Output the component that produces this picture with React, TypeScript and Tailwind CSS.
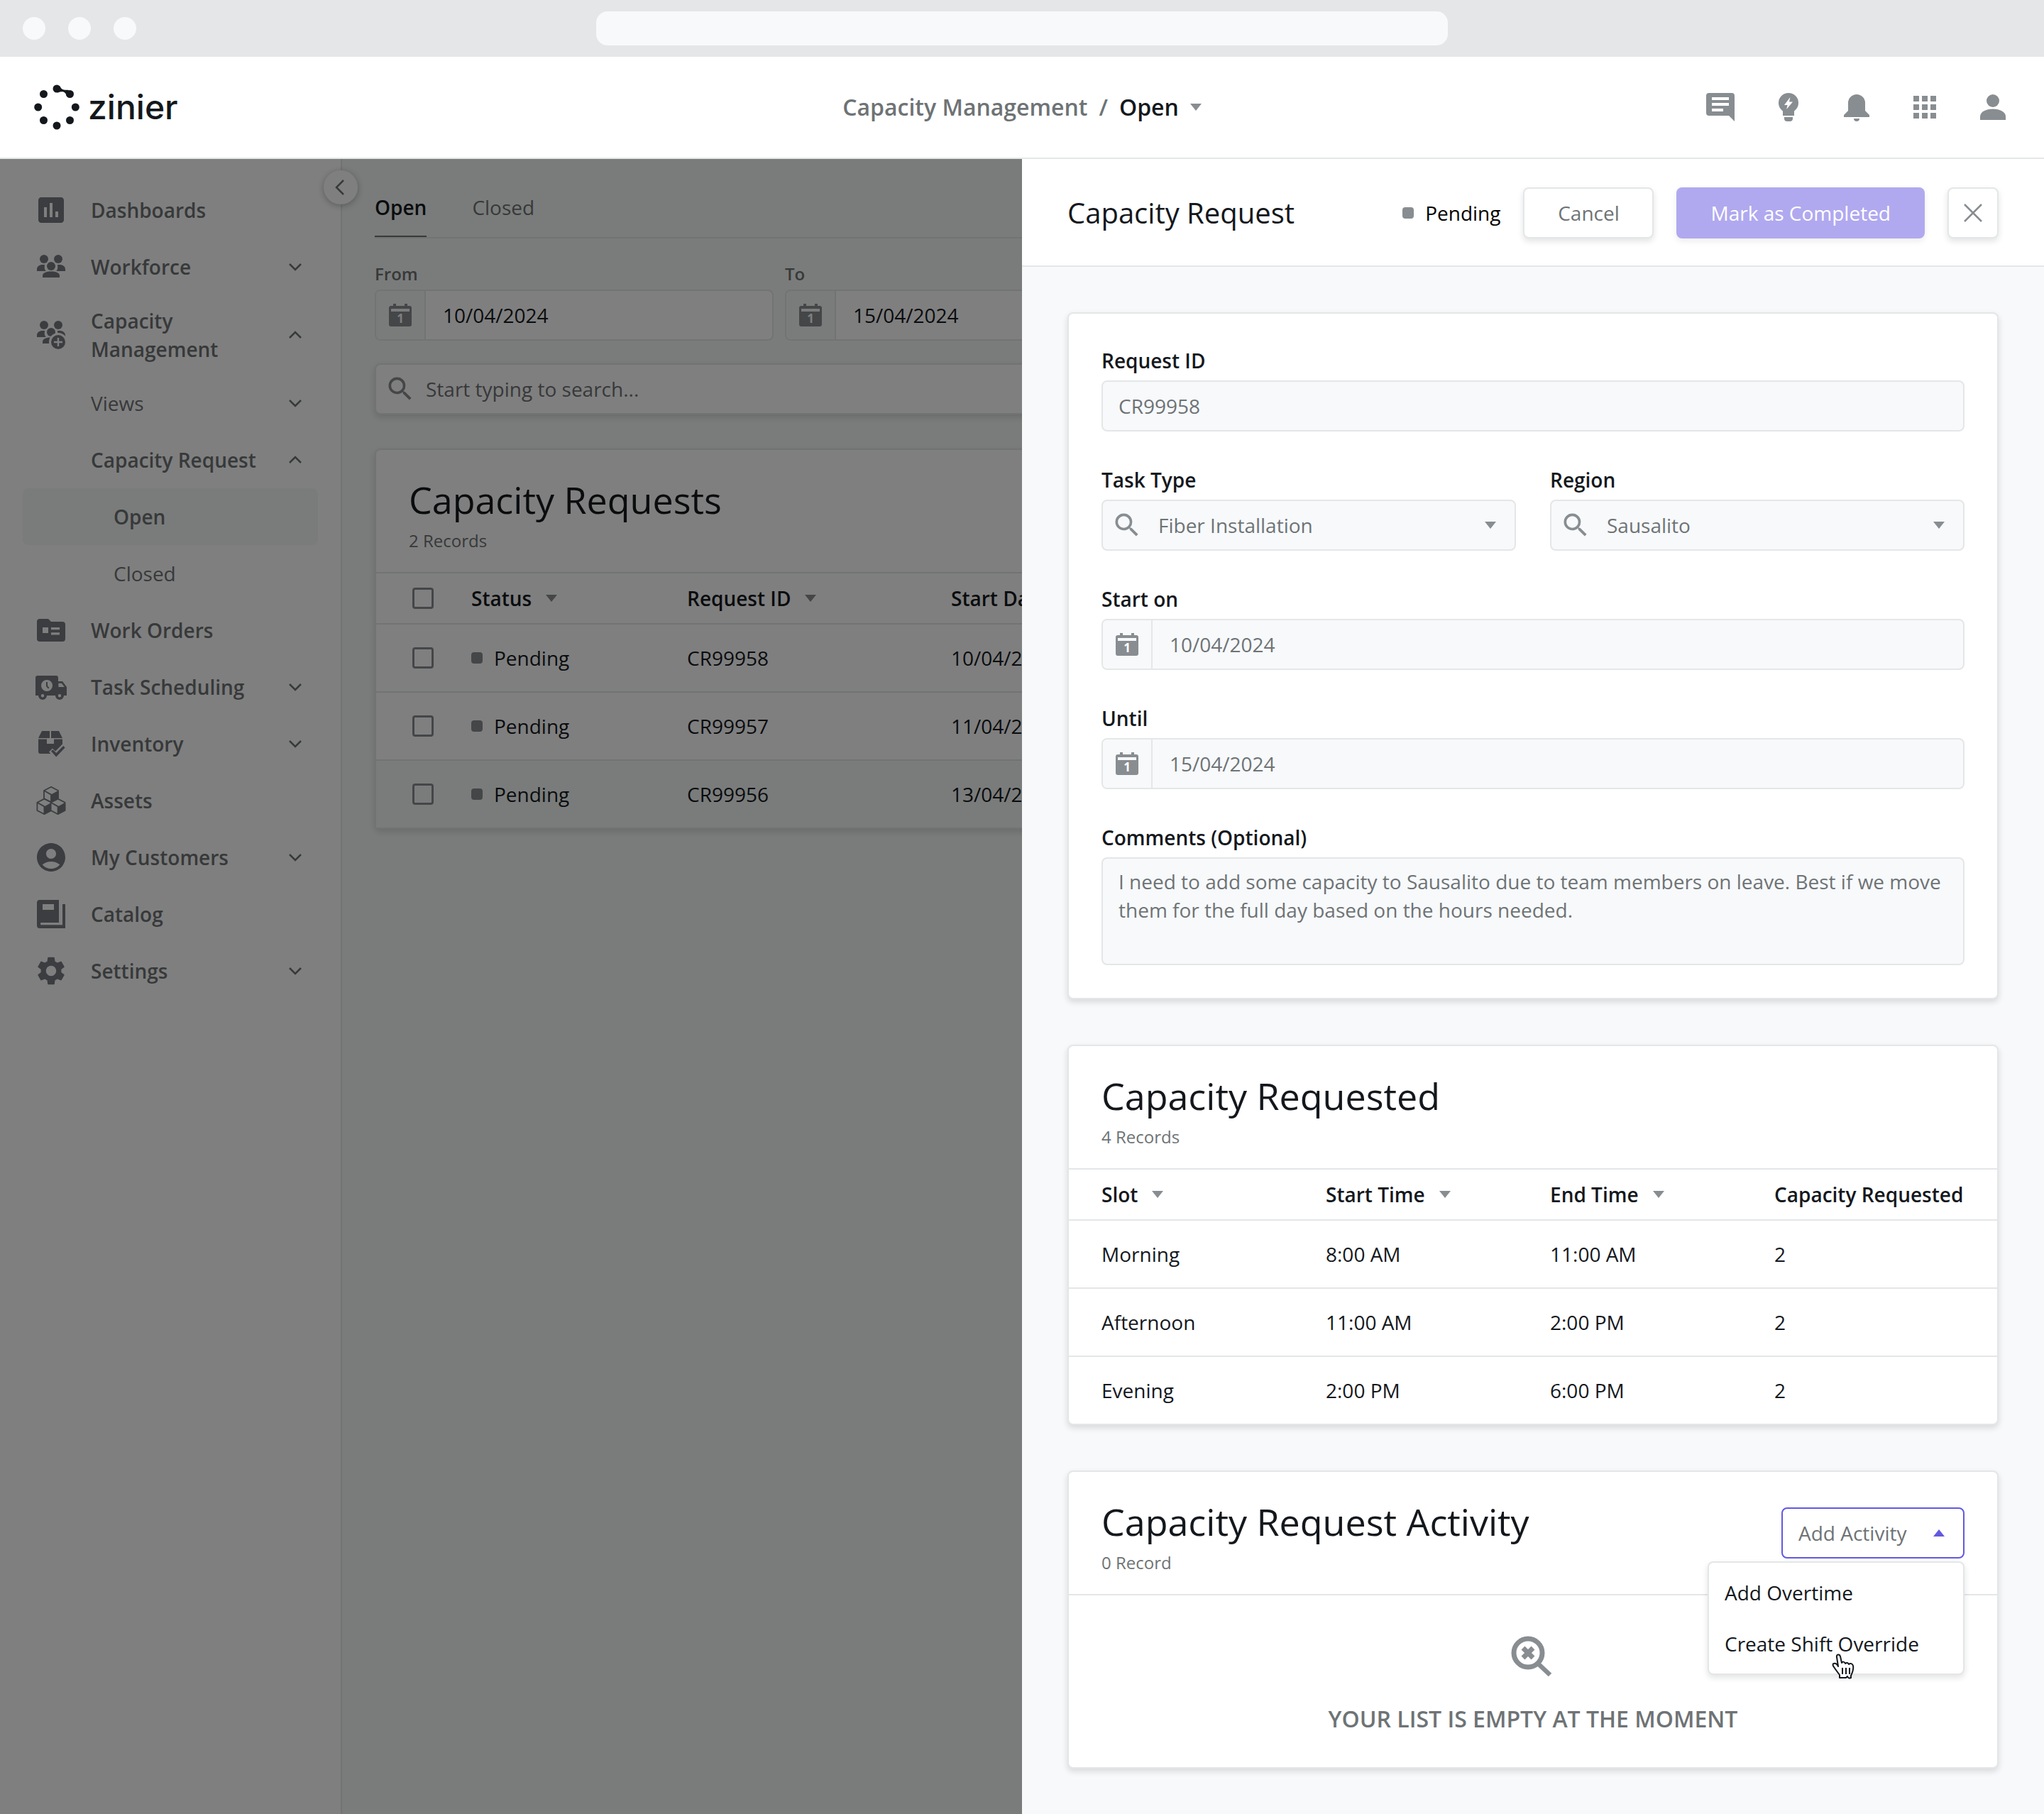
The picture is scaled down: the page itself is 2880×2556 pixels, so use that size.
import { ReactNode, useState } from "react";
import clsx from "clsx";
import { MdAccountCircle, MdApps, MdInsertChart, MdSearch, MdSettings } from "react-icons/md";

type IconProps = { className?: string };

type NavItem = {
  label: string;
  icon?: ReactNode;
  level: 0 | 1 | 2;
  chevron?: "up" | "down";
  strong?: boolean;
  active?: boolean;
};

const Svg = ({ className, children }: IconProps & { children: ReactNode }) => (
  <svg viewBox="0 0 24 24" fill="currentColor" fillRule="evenodd" className={className} aria-hidden="true">
    {children}
  </svg>
);

const People = () => (
  <>
    <circle cx="7" cy="6" r="3" />
    <circle cx="17" cy="6" r="3" />
    <circle cx="12" cy="11" r="3" />
    <path d="M2 14.5v-1.3C2 11.300 3.700 10 6 10h1.600a5 5 0 0 0 .7 4.500zM22 14.500v-1.300c0-1.900-1.700-3.200-4-3.200h-1.600a5 5 0 0 1-.7 4.500z" />
    <path d="M6 19v-1.300c0-1.900 2.700-2.900 6-2.900s6 1 6 2.900V19z" />
  </>
);

const WorkforceIcon = ({ className }: IconProps) => (
  <Svg className={className}>
    <g transform="translate(0 .5)">
      <People />
    </g>
  </Svg>
);

const CapacityIcon = ({ className }: IconProps) => (
  <Svg className={className}>
    <g transform="translate(0 -1)">
      <People />
    </g>
    <circle cx="17" cy="17" r="6.500" fill="#fff" />
    <circle cx="17" cy="17" r="5" />
    <path d="M16.400 14h1.200v2.400H20v1.200h-2.400V20h-1.200v-2.400H14v-1.200h2.400z" fill="#fff" />
  </Svg>
);

const WorkOrderIcon = ({ className }: IconProps) => (
  <Svg className={className}>
    <path d="M4 4h6l2 2h8a2 2 0 0 1 2 2v10a2 2 0 0 1-2 2H4a2 2 0 0 1-2-2V6a2 2 0 0 1 2-2zm2 6v4h4v-4zm6 0v1.600h6V10zm0 3.600v1.600h6v-1.600z" />
  </Svg>
);

const TruckIcon = ({ className }: IconProps) => (
  <Svg className={className}>
    <path d="M2.500 4h13A1.500 1.500 0 0 1 17 5.500V8h3l3 4v6h-2a3 3 0 0 1-6 0H9a3 3 0 0 1-6 0H1V5.500A1.500 1.500 0 0 1 2.500 4zM9 7a4 4 0 1 0 0 8 4 4 0 0 0 0-8zm8.200 2.400V12h4.200l-2-2.600zM6 17a1.100 1.100 0 1 0 0 2.200A1.100 1.100 0 0 0 6 17zm12 0a1.100 1.100 0 1 0 0 2.200 1.100 1.100 0 0 0 0-2.200z" />
    <path d="M8.500 8.500h1v2.600l1.200 1.400-.7.700-1.500-1.700z" />
  </Svg>
);

const InventoryIcon = ({ className }: IconProps) => (
  <Svg className={className}>
    <path d="M5.500 3H11v5H3zM12 3h5.500L20 8h-8z" />
    <path d="M3 8.800h6V12h5V8.800h6v3.400l-5 5-2-2-2.500 2.500 1.300 1.300H4.500A1.500 1.500 0 0 1 3 17.500z" />
    <path d="M12 17.300l1.200-1.200 2.400 2.400 5-5 1.200 1.200-6.200 6.600z" />
  </Svg>
);

const Cube = ({ x, y }: { x: number; y: number }) => (
  <g transform={`translate(${x} ${y})`}>
    <path d="M0-5.400 5-2.800V2.800L0 5.400-5 2.800V-2.800z" fill="#fff" stroke="currentColor" strokeWidth=".9" strokeLinejoin="round" />
    <path d="M0 0 5-2.800V2.800L0 5.400z" />
    <path d="M-5-2.800 0 0v5.400" fill="none" stroke="currentColor" strokeWidth=".9" />
  </g>
);

const AssetsIcon = ({ className }: IconProps) => (
  <Svg className={className}>
    <Cube x={12} y={7.800} />
    <Cube x={7.200} y={16.200} />
    <Cube x={16.800} y={16.200} />
  </Svg>
);

const CatalogIcon = ({ className }: IconProps) => (
  <Svg className={className}>
    <path d="M4 2h13.500v16H4.600v1.600H20V5h2v17H4a2 2 0 0 1-2-2V4a2 2 0 0 1 2-2zm2 3v4h8V5z" />
  </Svg>
);

const CommentIcon = ({ className }: IconProps) => (
  <Svg className={className}>
    <path d="M4 2h16a2 2 0 0 1 2 2v18l-4-4H4a2 2 0 0 1-2-2V4a2 2 0 0 1 2-2zm2 3v2h12V5zm0 4v2h12V9zm0 4v2h8v-2z" />
  </Svg>
);

const BulbIcon = ({ className }: IconProps) => (
  <Svg className={className}>
    <path d="M12 2a7 7 0 0 0-7 7c0 2.600 1.300 4.400 3 5.800V18h8v-3.200c1.700-1.400 3-3.200 3-5.800a7 7 0 0 0-7-7zm1.200 3L9 10.500h2.300l-.7 3 4.400-5.300h-2.500zM9 19h6v1a2 2 0 0 1-2 2h-2a2 2 0 0 1-2-2z" />
  </Svg>
);

const BellIcon = ({ className }: IconProps) => (
  <Svg className={className}>
    <path d="M12 3a6 6 0 0 0-6 6v5.500l-3 3V19h18v-1.500l-3-3V9a6 6 0 0 0-6-6zm-2 17a2 2 0 0 0 4 0z" />
  </Svg>
);

const PersonIcon = ({ className }: IconProps) => (
  <Svg className={className}>
    <circle cx="12" cy="7.500" r="4.500" />
    <path d="M3 21v-2.500c0-3.100 4-5.300 9-5.300s9 2.200 9 5.300V21z" />
  </Svg>
);

const CalendarIcon = ({ className }: IconProps) => (
  <svg viewBox="0 0 36 36" fill="currentColor" className={className} aria-hidden="true">
    <path
      fillRule="evenodd"
      d="M8 2h4v3h12V2h4v3h3a3 3 0 0 1 3 3v23a3 3 0 0 1-3 3H5a3 3 0 0 1-3-3V8a3 3 0 0 1 3-3h3zM5 9v4h26V9z"
    />
    <text x="18" y="29" textAnchor="middle" fontSize="17" fontWeight="700" fill="#fff">
      1
    </text>
  </svg>
);

const EmptyIcon = ({ className }: IconProps) => (
  <svg viewBox="0 0 72 72" fill="none" stroke="currentColor" className={className} aria-hidden="true">
    <circle cx="29" cy="33" r="20" strokeWidth="7" />
    <path d="M43 48 60 64" strokeWidth="6.500" />
    <path d="M22 26 36 40M36 26 22 40" strokeWidth="7" />
  </svg>
);

const Triangle = ({ className, up }: IconProps & { up?: boolean }) => (
  <svg viewBox="0 0 16 10" fill="currentColor" className={clsx("h-[10px] w-4 shrink-0", className)} aria-hidden="true">
    <path d={up ? "M8 0l8 10H0z" : "M0 0h16L8 10z"} />
  </svg>
);

const Chevron = ({ dir }: { dir: "up" | "down" | "left" }) => {
  const paths = { up: "M8 20l8-8 8 8", down: "M8 12l8 8 8-8", left: "M20 6l-10 10 10 10" };
  return (
    <svg viewBox="0 0 32 32" fill="none" stroke="currentColor" strokeWidth="2.500" className="size-8 shrink-0" aria-hidden="true">
      <path d={paths[dir]} />
    </svg>
  );
};

const HandCursor = ({ className }: IconProps) => (
  <svg viewBox="0 0 32 36" className={className} fill="#fff" stroke="#14181d" strokeWidth="2" strokeLinejoin="round" aria-hidden="true">
    <path d="M11 34v-4C8 26 5 22 3 19c-2-3-2-5 0-5 3-1 5 2 6 4L7 5c-1-4 4-5 5-1l2 9c1-2 4-2 5 1 2-2 4-1 5 1 2-2 5-1 6 2 1 5-1 10-3 14v3c-2 1-4 1-5-2l-2 2z" />
    <path d="M15 20v9M20 20v9M25 20v9" fill="none" />
  </svg>
);

const Logo = () => (
  <a href="#" className="flex items-center gap-3 text-[#14181d]" aria-label="zinier">
    <svg viewBox="0 0 64 64" fill="currentColor" className="size-16" aria-hidden="true">
      <circle cx="32" cy="6" r="5.500" />
      <circle cx="50.500" cy="13.500" r="5.500" />
      <circle cx="58.300" cy="32" r="5.500" />
      <circle cx="50.500" cy="50.500" r="5.500" />
      <circle cx="32" cy="58" r="5.500" />
      <circle cx="13.500" cy="50.500" r="5.500" />
      <circle cx="5.700" cy="32" r="5.500" />
      <circle cx="13.500" cy="13.500" r="5.500" />
      <path d="M36 2.300C38 6 40 7.300 42 7.600c2 .4 4.500.2 7 .5l-3 8.500c-1-3.500-2.500-5.600-4.500-6.200-2.500-.6-5 .1-8.500 1z" />
    </svg>
    <span className="font-[Inter] text-[48px] leading-[56px] font-medium">zinier</span>
  </a>
);

const navItems: NavItem[] = [
  { label: "Dashboards", icon: <MdInsertChart className="size-12" />, level: 0 },
  { label: "Workforce", icon: <WorkforceIcon className="size-12" />, level: 0, chevron: "down" },
  { label: "Capacity Management", icon: <CapacityIcon className="size-12" />, level: 0, chevron: "up" },
  { label: "Views", level: 1, chevron: "down" },
  { label: "Capacity Request", level: 1, chevron: "up", strong: true },
  { label: "Open", level: 2, strong: true, active: true },
  { label: "Closed", level: 2 },
  { label: "Work Orders", icon: <WorkOrderIcon className="size-12" />, level: 0 },
  { label: "Task Scheduling", icon: <TruckIcon className="size-12" />, level: 0, chevron: "down" },
  { label: "Inventory", icon: <InventoryIcon className="size-12" />, level: 0, chevron: "down" },
  { label: "Assets", icon: <AssetsIcon className="size-12" />, level: 0 },
  { label: "My Customers", icon: <MdAccountCircle className="size-12" />, level: 0, chevron: "down" },
  { label: "Catalog", icon: <CatalogIcon className="size-12" />, level: 0 },
  { label: "Settings", icon: <MdSettings className="size-12" />, level: 0, chevron: "down" },
];

const requests = [
  { id: "CR99958", start: "10/04/2024" },
  { id: "CR99957", start: "11/04/2024" },
  { id: "CR99956", start: "13/04/2024", hovered: true },
];

const slots = [
  { slot: "Morning", start: "8:00 AM", end: "11:00 AM", capacity: 2 },
  { slot: "Afternoon", start: "11:00 AM", end: "2:00 PM", capacity: 2 },
  { slot: "Evening", start: "2:00 PM", end: "6:00 PM", capacity: 2 },
];

const BrowserBar = () => (
  <div className="grid h-20 grid-cols-[1fr_1200px_1fr] items-center bg-[#e4e6e8]">
    <div className="flex gap-8 pl-8">
      <span className="size-8 rounded-full bg-[#f7f9fb]" />
      <span className="size-8 rounded-full bg-[#f7f9fb]" />
      <span className="size-8 rounded-full bg-[#f7f9fb]" />
    </div>
    <div className="h-12 rounded-2xl bg-[#f7f9fb]" />
  </div>
);

const Header = () => (
  <header className="grid h-36 grid-cols-[1fr_auto_1fr] items-center border-b-2 border-[#e4e6e7] bg-white px-12">
    <Logo />
    <nav className="flex items-center gap-4 text-[32px] leading-10 font-semibold">
      <a href="#" className="text-[#6e7375]">
        Capacity Management
      </a>
      <span className="text-[#6e7375]">/</span>
      <button className="flex items-center gap-4 text-[#14181d]">
        Open
        <Triangle className="text-[#888d91]" />
      </button>
    </nav>
    <div className="flex justify-end gap-12 text-[#888d91]">
      <button aria-label="Messages">
        <CommentIcon className="size-12" />
      </button>
      <button aria-label="Insights">
        <BulbIcon className="size-12" />
      </button>
      <button aria-label="Notifications">
        <BellIcon className="size-12" />
      </button>
      <button aria-label="Apps">
        <MdApps className="size-12" />
      </button>
      <button aria-label="Account">
        <PersonIcon className="size-12" />
      </button>
    </div>
  </header>
);

const Sidebar = () => (
  <aside className="relative w-[482px] shrink-0 border-r-2 border-[#e4e6e7] bg-white px-8 py-8">
    <ul>
      {navItems.map((item) => (
        <li key={item.label + item.level}>
          <a
            href="#"
            className={clsx(
              "flex min-h-20 items-center rounded-lg p-4 text-[28px] leading-10 text-[#6e7375]",
              (item.level === 0 || item.strong) && "font-semibold",
              item.active && "bg-[#f4f8f6]"
            )}
          >
            {item.icon && <span className="mr-8 shrink-0 text-[#777b80]">{item.icon}</span>}
            <span className={clsx("flex-1", item.level === 1 && "pl-20", item.level === 2 && "pl-28")}>
              {item.label}
            </span>
            {item.chevron && <Chevron dir={item.chevron} />}
          </a>
        </li>
      ))}
    </ul>
    <button
      aria-label="Collapse menu"
      className="absolute top-4 -right-6 z-[1] flex size-12 items-center justify-center rounded-full bg-white text-[#6e7375] shadow-[0_2px_10px_rgba(20,24,29,0.3)]"
    >
      <Chevron dir="left" />
    </button>
  </aside>
);

const DateField = ({ id, label, value, muted }: { id: string; label: string; value: string; muted?: boolean }) => (
  <div>
    <label
      htmlFor={id}
      className={clsx(
        "block font-semibold",
        muted ? "mb-2 text-[28px] leading-10 text-[#14181d]" : "mb-1 text-2xl leading-9 text-[#6e7375]"
      )}
    >
      {label}
    </label>
    <div className={clsx("flex h-18 overflow-hidden rounded-lg border-2 border-[#e4e6e7]", muted ? "bg-[#f7f9fb]" : "bg-white")}>
      <span
        className={clsx(
          "flex w-[70px] shrink-0 items-center justify-center border-r-2 border-[#e4e6e7] text-[#888d91]",
          muted ? "bg-[#f7f9fb]" : "bg-[#f4f8f6]"
        )}
      >
        <CalendarIcon className="size-9" />
      </span>
      <input
        id={id}
        defaultValue={value}
        className={clsx("min-w-0 flex-1 px-6 text-[28px] leading-10 outline-none", muted ? "text-[#6e7375]" : "text-[#14181d]")}
      />
    </div>
  </div>
);

const SelectField = ({ id, label, value }: { id: string; label: string; value: string }) => (
  <div>
    <label htmlFor={id} className="mb-2 block text-[28px] leading-10 font-semibold text-[#14181d]">
      {label}
    </label>
    <div className="relative">
      <MdSearch className="pointer-events-none absolute top-[14px] left-[14px] size-11 text-[#888d91]" />
      <select
        id={id}
        className="h-18 w-full appearance-none rounded-lg border-2 border-[#e4e6e7] bg-[#f7f9fb] pr-16 pl-[78px] text-[28px] leading-10 text-[#6e7375]"
      >
        <option>{value}</option>
      </select>
      <Triangle className="pointer-events-none absolute top-[31px] right-7 text-[#888d91]" />
    </div>
  </div>
);

const Card = ({ children, className }: { children: ReactNode; className?: string }) => (
  <section className={clsx("rounded-lg border-2 border-[#e4e6e7] bg-white shadow-[0_4px_8px_rgba(20,24,29,0.14)]", className)}>
    {children}
  </section>
);

const CardHeader = ({ title, count, children }: { title: string; count: string; children?: ReactNode }) => (
  <div className="flex h-[174px] items-center justify-between border-b-2 border-[#e4e6e7] px-[46px]">
    <div className="pt-4">
      <h2 className="mb-2 text-[52px] leading-[60px] text-[#14181d]">{title}</h2>
      <p className="text-2xl leading-10 text-[#6e7375]">{count}</p>
    </div>
    {children}
  </div>
);

const Th = ({ children, sortable = true, className }: { children: ReactNode; sortable?: boolean; className?: string }) => (
  <th className={clsx("h-18 border-b-2 border-[#e4e6e7] p-0 text-left font-semibold whitespace-nowrap", className)}>
    <span className="flex items-center gap-5">
      {children}
      {sortable && <Triangle className="text-[#888d91]" />}
    </span>
  </th>
);

const Checkbox = ({ label }: { label: string }) => (
  <span className="flex size-10 items-center justify-center">
    <input type="checkbox" aria-label={label} className="size-[30px] appearance-none rounded-sm border-3 border-[#888d91]" />
  </span>
);

const Status = ({ children }: { children: ReactNode }) => (
  <span className="flex items-center gap-4">
    <span className="size-4 rounded-sm bg-[#888d91]" />
    {children}
  </span>
);

const RequestsPage = () => (
  <main className="min-w-0 flex-1 bg-[#f4f8f6] pr-14 pl-[46px]">
    <div className="flex gap-16 border-b-2 border-[#e4e6e7] text-[28px] leading-10">
      <button className="border-b-2 border-[#6e7375] pt-12 pb-5 font-semibold text-[#14181d]">Open</button>
      <button className="border-b-2 border-transparent pt-12 pb-5 text-[#6e7375]">Closed</button>
    </div>
    <div className="mt-8 grid grid-cols-4 gap-4">
      <DateField id="from" label="From" value="10/04/2024" />
      <DateField id="to" label="To" value="15/04/2024" />
    </div>
    <Card className="mt-8 flex h-18 items-center gap-[14px] pl-3">
      <MdSearch className="size-11 shrink-0 text-[#888d91]" />
      <input
        type="search"
        aria-label="Search"
        placeholder="Start typing to search..."
        className="flex-1 text-[28px] leading-10 outline-none placeholder:text-[#6e7375]"
      />
    </Card>
    <Card className="mt-12">
      <CardHeader title="Capacity Requests" count="2 Records" />
      <table className="w-full table-fixed border-separate border-spacing-0 text-[28px] leading-10 text-[#14181d]">
        <colgroup>
          <col className="w-[134px]" />
          <col className="w-[304px]" />
          <col className="w-[372px]" />
          <col />
        </colgroup>
        <thead>
          <tr>
            <Th sortable={false} className="pl-[46px]">
              <Checkbox label="Select all" />
            </Th>
            <Th>Status</Th>
            <Th>Request ID</Th>
            <Th>Start Date</Th>
          </tr>
        </thead>
        <tbody>
          {requests.map((request) => (
            <tr
              key={request.id}
              className={clsx(
                "[&>td]:border-b-2 [&>td]:border-[#e4e6e7] last:[&>td]:border-b-0 [&>td]:p-0",
                request.hovered ? "h-[94px] bg-[#f4f8f6]" : "h-24"
              )}
            >
              <td className="pl-[46px]!">
                <Checkbox label={`Select ${request.id}`} />
              </td>
              <td>
                <Status>Pending</Status>
              </td>
              <td>{request.id}</td>
              <td>{request.start}</td>
            </tr>
          ))}
        </tbody>
      </table>
    </Card>
  </main>
);

const DetailsForm = () => (
  <Card className="grid grid-cols-2 gap-12 p-[46px]">
    <div className="col-span-2">
      <label htmlFor="request-id" className="mb-2 block text-[28px] leading-10 font-semibold text-[#14181d]">
        Request ID
      </label>
      <input
        id="request-id"
        defaultValue="CR99958"
        className="block h-18 w-full rounded-lg border-2 border-[#e4e6e7] bg-[#f7f9fb] px-[22px] text-[28px] leading-10 text-[#6e7375]"
      />
    </div>
    <SelectField id="task-type" label="Task Type" value="Fiber Installation" />
    <SelectField id="region" label="Region" value="Sausalito" />
    <div className="col-span-2">
      <DateField id="start-on" label="Start on" value="10/04/2024" muted />
    </div>
    <div className="col-span-2">
      <DateField id="until" label="Until" value="15/04/2024" muted />
    </div>
    <div className="col-span-2">
      <label htmlFor="comments" className="mb-2 block text-[28px] leading-10 font-semibold text-[#14181d]">
        Comments (Optional)
      </label>
      <textarea
        id="comments"
        className="block h-[152px] w-full resize-none rounded-lg border-2 border-[#e4e6e7] bg-[#f7f9fb] px-[22px] py-3 text-[28px] leading-10 text-[#6e7375]"
        defaultValue="I need to add some capacity to Sausalito due to team members on leave. Best if we move them for the full day based on the hours needed."
      />
    </div>
  </Card>
);

const SlotsCard = () => (
  <Card>
    <CardHeader title="Capacity Requested" count="4 Records" />
    <table className="w-full table-fixed border-separate border-spacing-0 text-[28px] leading-10 text-[#14181d]">
      <colgroup>
        <col className="w-[362px]" />
        <col className="w-[316px]" />
        <col className="w-[316px]" />
        <col />
      </colgroup>
      <thead>
        <tr>
          <Th className="pl-[46px]">Slot</Th>
          <Th>Start Time</Th>
          <Th>End Time</Th>
          <Th sortable={false}>Capacity Requested</Th>
        </tr>
      </thead>
      <tbody>
        {slots.map((row) => (
          <tr
            key={row.slot}
            className="h-24 last:h-[94px] [&>td]:border-b-2 [&>td]:border-[#e4e6e7] last:[&>td]:border-b-0 [&>td]:p-0"
          >
            <td className="pl-[46px]!">{row.slot}</td>
            <td>{row.start}</td>
            <td>{row.end}</td>
            <td>{row.capacity}</td>
          </tr>
        ))}
      </tbody>
    </table>
  </Card>
);

const ActivityCard = () => {
  const [open, setOpen] = useState(true);
  return (
    <Card>
      <CardHeader title="Capacity Request Activity" count="0 Record">
        <div className="relative">
          <button
            onClick={() => setOpen(!open)}
            aria-expanded={open}
            className="flex h-18 w-[258px] items-center justify-between rounded-lg border-2 border-[#6259e0] bg-white pr-[26px] pl-[22px] text-[28px] leading-10 text-[#6e7375]"
          >
            Add Activity
            <Triangle up className="text-[#6259e0]" />
          </button>
          {open && (
            <div className="absolute top-full right-0 z-10 mt-1 w-[362px] rounded-lg border-2 border-[#e4e6e7] bg-white py-[6px] text-[28px] leading-10 text-[#14181d] shadow-[0_4px_8px_rgba(20,24,29,0.12)]">
              <button className="block h-18 w-full px-[22px] text-left">Add Overtime</button>
              <button className="block h-18 w-full px-[22px] text-left">Create Shift Override</button>
              <HandCursor className="absolute right-[153px] -bottom-2 h-9 w-8" />
            </div>
          )}
        </div>
      </CardHeader>
      <div className="flex flex-col items-center pt-12 pb-[46px] text-[#6e7375]">
        <EmptyIcon className="size-18 text-[#888d91]" />
        <p className="mt-8 text-[32px] leading-[44px] font-semibold uppercase">Your list is empty at the moment</p>
      </div>
    </Card>
  );
};

const RequestDrawer = () => (
  <div className="z-20 w-1/2 justify-self-end bg-[#f7f9fb] [grid-area:1/1]">
    <div className="flex items-center gap-8 border-b-2 border-[#e4e6e7] bg-white px-16 pt-10 pb-[38px] text-[28px] leading-10">
      <h1 className="mr-auto text-[40px] leading-[56px] text-[#14181d]">Capacity Request</h1>
      <Status>Pending</Status>
      <button className="h-18 w-[184px] rounded-lg border-2 border-[#e4e6e7] bg-white text-[#6e7375] shadow-[0_4px_8px_rgba(20,24,29,0.12)]">
        Cancel
      </button>
      <button className="h-18 rounded-lg bg-[#b0a9ef] px-12 text-white shadow-[0_4px_8px_rgba(20,24,29,0.08)]">
        Mark as Completed
      </button>
      <button
        aria-label="Close"
        className="flex size-18 items-center justify-center rounded-lg border-2 border-[#e4e6e7] bg-white text-[#888d91] shadow-[0_4px_8px_rgba(20,24,29,0.12)]"
      >
        <svg viewBox="0 0 26 26" stroke="currentColor" strokeWidth="2.500" className="size-[26px]" aria-hidden="true">
          <path d="M1 1l24 24M25 1L1 25" />
        </svg>
      </button>
    </div>
    <div className="flex flex-col gap-16 p-16">
      <DetailsForm />
      <SlotsCard />
      <ActivityCard />
    </div>
  </div>
);

export default function App() {
  return (
    <div className="flex min-h-screen flex-col font-['Open_Sans',sans-serif]">
      <BrowserBar />
      <Header />
      <div className="grid flex-1 grid-cols-1">
        <div className="relative flex [grid-area:1/1]">
          <Sidebar />
          <RequestsPage />
          <div className="absolute inset-0 z-10 bg-black/50" />
        </div>
        <RequestDrawer />
      </div>
    </div>
  );
}
